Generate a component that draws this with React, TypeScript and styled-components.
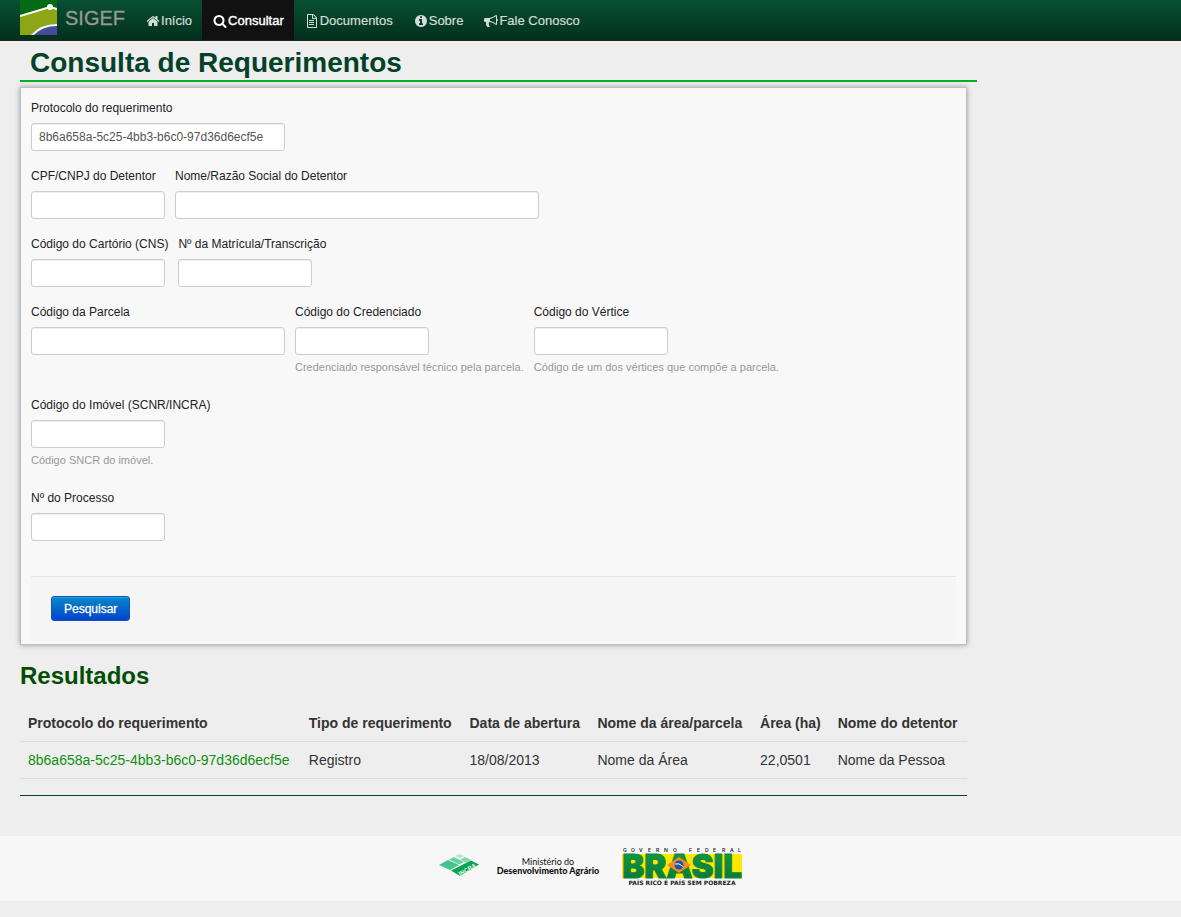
import React from 'react';
import styled, { createGlobalStyle } from 'styled-components';

const GlobalStyle = createGlobalStyle`
  *, *::before, *::after { box-sizing: border-box; }
  body {
    margin: 0;
    background: #eeeeee;
    color: #333333;
    font: 14px/20px "Liberation Sans", Arial, Helvetica, sans-serif;
  }
`;

const Navbar = styled.header`
  display: flex;
  align-items: stretch;
  height: 41px;
  padding-left: 20px;
  background: linear-gradient(to bottom, #085033, #02301c);
  border-bottom: 1px solid #222222;
`;

const Brand = styled.a`
  display: flex;
  align-items: flex-start;
  gap: 8px;
  padding-right: 10px;
  color: #999999;
  font-size: 20px;
  line-height: 36px;
  text-decoration: none;
  -webkit-text-stroke: 0.3px currentColor;
`;

const BrandMark = styled.svg`
  display: block;
  width: 37px;
  height: 35px;
`;

const Menu = styled.nav`
  display: flex;
`;

const MenuLink = styled.a<{ $active?: boolean }>`
  display: flex;
  align-items: center;
  padding: 2px 10px 0;
  font-size: 13px;
  text-decoration: none;
  color: ${(p) => (p.$active ? '#ffffff' : '#d3dcd8')};
  background: ${(p) => (p.$active ? '#111111' : 'transparent')};
  -webkit-text-stroke: ${(p) => (p.$active ? '0.4px' : '0.2px')} currentColor;
`;

const MenuIcon = styled.svg`
  width: 16px;
  height: 14px;
  fill: currentColor;
`;

const Content = styled.main`
  margin-left: 20px;
  max-width: calc((100% - 40px) * 0.83);
`;

const PageTitle = styled.h1`
  margin: 0 -10px 5px 0;
  padding: 5px 0 0 10px;
  border-bottom: 2px solid #05ad25;
  color: #044228;
  font-size: 28px;
  line-height: 34px;
`;

const Panel = styled.form`
  padding: 10px 10px 3px;
  background: #f8f8f8;
  border: 1px solid #bbbfc8;
  box-shadow: 0 0 5px #999999;
`;

const FieldRow = styled.div`
  display: flex;
  flex-wrap: wrap;
  gap: 10px;
  margin-bottom: 15px;
`;

const FieldBox = styled.div`
  display: flex;
  flex-direction: column;
  align-items: flex-start;
`;

const Label = styled.label`
  margin-bottom: 5px;
  font-size: 12px;
  line-height: 20px;
  color: #222222;
`;

const widths = { small: '134px', medium: '254px', large: '364px' };
type Size = keyof typeof widths;

const TextInput = styled.input<{ $size: Size }>`
  width: ${(p) => widths[p.$size]};
  height: 28px;
  padding: 0 7px;
  border: 1px solid #cccccc;
  border-radius: 3px;
  background: #ffffff;
  box-shadow: inset 0 1px 1px rgba(0, 0, 0, 0.075);
  color: #555555;
  font: 12px/20px "Liberation Sans", Arial, sans-serif;
`;

const Help = styled.span`
  margin: 2px 0 3px;
  color: #999999;
  font-size: 11px;
  line-height: 20px;
`;

const Actions = styled.div`
  margin-top: 35px;
  padding: 19px 20px 20px;
  background: #f5f5f5;
  border-top: 1px solid #e5e5e5;
`;

const SubmitButton = styled.button`
  display: block;
  height: 25px;
  padding: 0 12px;
  border: 1px solid #0a55b5;
  border-radius: 3px;
  background: linear-gradient(to bottom, #0688cc, #0444cc);
  box-shadow: inset 0 1px 0 rgba(255, 255, 255, 0.2);
  color: #ffffff;
  font: 12px/20px "Liberation Sans", Arial, sans-serif;
  text-shadow: 0 -1px 0 rgba(0, 0, 0, 0.25);
  -webkit-text-stroke: 0.3px #ffffff;
`;

const SectionTitle = styled.h2`
  margin: 11px 0 9px;
  color: #044d04;
  font-size: 24px;
  line-height: 40px;
`;

const Results = styled.table`
  width: 100%;
  border-collapse: collapse;
  border-bottom: 1px solid #dddddd;

  th, td {
    padding: 8px;
    text-align: left;
    white-space: nowrap;
  }
  td { border-top: 1px solid #dddddd; }
  a { color: #109010; text-decoration: none; }
`;

const Divider = styled.hr`
  margin: 16px 0 40px;
  border: 0;
  border-top: 1px solid #044228;
`;

const Footer = styled.footer`
  display: flex;
  justify-content: center;
  align-items: flex-start;
  height: 65px;
  margin-bottom: 16px;
  background: #f7f7f7;
`;

const IncraLogo = styled.svg`
  width: 42px;
  height: 26px;
  margin: 16px 16px 0 0;
`;

const Ministry = styled.p`
  margin: 21px 23px 0 0;
  color: #111111;
  text-align: center;
  font: 9px/9px Lato, "Open Sans", sans-serif;

  strong { display: block; font-weight: 900; }
`;

const BrasilLogo = styled.svg`
  width: 120px;
  height: 40px;
  margin-top: 10px;
`;

const icons = {
  home: 'M1472 992v480q0 26-19 45t-45 19h-384v-384h-256v384h-384q-26 0-45-19t-19-45v-480q0-1 .5-3t.5-3l575-474 575 474q1 2 1 6zm223-69l-62 74q-8 9-21 11h-3q-13 0-21-7l-692-577-692 577q-12 8-24 7-13-2-21-11l-62-74q-8-10-7-23.5t11-21.5l719-599q32-26 76-26t76 26l244 204v-195q0-14 9-23t23-9h192q14 0 23 9t9 23v408l219 182q10 8 11 21.5t-7 23.5z',
  search: 'M1216 832q0-185-131.5-316.5t-316.5-131.5-316.5 131.5-131.5 316.5 131.5 316.5 316.5 131.5 316.5-131.5 131.5-316.5zm512 832q0 52-38 90t-90 38q-54 0-90-38l-343-342q-179 124-399 124-143 0-273.5-55.5t-225-150-150-225-55.5-273.5 55.5-273.5 150-225 225-150 273.5-55.5 273.5 55.5 225 150 150 225 55.5 273.5q0 220-124 399l343 343q37 37 37 90z',
  file: 'M1468 380q28 28 48 76t20 88v1152q0 40-28 68t-68 28h-1088q-40 0-68-28t-28-68v-1600q0-40 28-68t68-28h640q40 0 88 20t76 48zm-444-244v376h376q-10-29-22-41l-313-313q-12-12-41-22zm384 1528v-1024h-416q-40 0-68-28t-28-68v-416h-512v1536h1024zm-896-864q0-14 9-23t23-9h576q14 0 23 9t9 23v64q0 14-9 23t-23 9h-576q-14 0-23-9t-9-23v-64zm608 224q14 0 23 9t9 23v64q0 14-9 23t-23 9h-576q-14 0-23-9t-9-23v-64q0-14 9-23t23-9h576zm0 256q14 0 23 9t9 23v64q0 14-9 23t-23 9h-576q-14 0-23-9t-9-23v-64q0-14 9-23t23-9h576z',
  info: 'M1152 1376v-160q0-14-9-23t-23-9h-96v-512q0-14-9-23t-23-9h-320q-14 0-23 9t-9 23v160q0 14 9 23t23 9h96v320h-96q-14 0-23 9t-9 23v160q0 14 9 23t23 9h448q14 0 23-9t9-23zm-128-896v-160q0-14-9-23t-23-9h-192q-14 0-23 9t-9 23v160q0 14 9 23t23 9h192q14 0 23-9t9-23zm640 416q0 209-103 385.5t-279.5 279.5-385.5 103-385.5-103-279.5-279.5-103-385.5 103-385.5 279.5-279.5 385.5-103 385.5 103 279.5 279.5 103 385.5z',
  bullhorn: 'M1664 640q53 0 90.5 37.5t37.5 90.5-37.5 90.5-90.5 37.5v384q0 52-38 90t-90 38q-417-347-812-380-58 19-91 66t-31 100.5 40 92.5q-20 33-23 65.5t6 58 33.5 55 48 50 61.5 50.5q-29 58-111.5 83t-168.5 11.5-132-55.5q-7-23-29.5-87.5t-32-94.5-23-89-15-101 3.5-98.5 22-110.5h-122q-66 0-113-47t-47-113v-192q0-66 47-113t113-47h480q435 0 896-384 52 0 90 38t38 90v384zm-128 604v-954q-394 302-768 343v270q377 42 768 341z',
};

const menu: { label: string; icon: keyof typeof icons; active?: boolean }[] = [
  { label: 'Início', icon: 'home' },
  { label: 'Consultar', icon: 'search', active: true },
  { label: 'Documentos', icon: 'file' },
  { label: 'Sobre', icon: 'info' },
  { label: 'Fale Conosco', icon: 'bullhorn' },
];

type FieldDef = { id: string; label: string; size: Size; value?: string; help?: string };

const rows: FieldDef[][] = [
  [{ id: 'protocolo', label: 'Protocolo do requerimento', size: 'medium', value: '8b6a658a-5c25-4bb3-b6c0-97d36d6ecf5e' }],
  [
    { id: 'cpf', label: 'CPF/CNPJ do Detentor', size: 'small' },
    { id: 'nome', label: 'Nome/Razão Social do Detentor', size: 'large' },
  ],
  [
    { id: 'cns', label: 'Código do Cartório (CNS)', size: 'small' },
    { id: 'matricula', label: 'Nº da Matrícula/Transcrição', size: 'small' },
  ],
  [
    { id: 'parcela', label: 'Código da Parcela', size: 'medium' },
    { id: 'credenciado', label: 'Código do Credenciado', size: 'small', help: 'Credenciado responsável técnico pela parcela.' },
    { id: 'vertice', label: 'Código do Vértice', size: 'small', help: 'Código de um dos vértices que compõe a parcela.' },
  ],
  [{ id: 'imovel', label: 'Código do Imóvel (SCNR/INCRA)', size: 'small', help: 'Código SNCR do imóvel.' }],
  [{ id: 'processo', label: 'Nº do Processo', size: 'small' }],
];

const columns = [
  'Protocolo do requerimento',
  'Tipo de requerimento',
  'Data de abertura',
  'Nome da área/parcela',
  'Área (ha)',
  'Nome do detentor',
];

function Field({ id, label, size, value, help }: FieldDef) {
  return (
    <FieldBox>
      <Label htmlFor={id}>{label}</Label>
      <TextInput id={id} type="text" $size={size} defaultValue={value} />
      {help && <Help>{help}</Help>}
    </FieldBox>
  );
}

export default function App() {
  return (
    <>
      <GlobalStyle />
      <Navbar>
        <Brand href="#">
          <BrandMark viewBox="0 0 37 35" aria-hidden="true">
            <rect width="37" height="35" fill="#056b14" />
            <path d="M0 16L30 7L37 9V35H0Z" fill="#8da516" />
            <path d="M12 35C19 27 28 25 37 25V35Z" fill="#454b97" />
            <path d="M0 16L30 7L37 9" fill="none" stroke="#fff" strokeWidth="2" />
            <path d="M12 35.500C19 27.500 27 25 37 25" fill="none" stroke="#fff" strokeWidth="2" />
            <circle cx="30" cy="7" r="3" fill="#fff" />
          </BrandMark>
          SIGEF
        </Brand>
        <Menu>
          {menu.map((m) => (
            <MenuLink key={m.label} href="#" $active={m.active}>
              <MenuIcon viewBox="0 0 1792 1792" aria-hidden="true"><path d={icons[m.icon]} /></MenuIcon>
              {m.label}
            </MenuLink>
          ))}
        </Menu>
      </Navbar>

      <Content>
        <PageTitle>Consulta de Requerimentos</PageTitle>
        <Panel onSubmit={(e) => e.preventDefault()}>
          {rows.map((row) => (
            <FieldRow key={row[0].id}>
              {row.map((f) => <Field key={f.id} {...f} />)}
            </FieldRow>
          ))}
          <Actions>
            <SubmitButton type="submit">Pesquisar</SubmitButton>
          </Actions>
        </Panel>

        <SectionTitle>Resultados</SectionTitle>
        <Results>
          <thead>
            <tr>{columns.map((c) => <th key={c} scope="col">{c}</th>)}</tr>
          </thead>
          <tbody>
            <tr>
              <td><a href="#">8b6a658a-5c25-4bb3-b6c0-97d36d6ecf5e</a></td>
              <td>Registro</td>
              <td>18/08/2013</td>
              <td>Nome da Área</td>
              <td>22,0501</td>
              <td>Nome da Pessoa</td>
            </tr>
          </tbody>
        </Results>
        <Divider />
      </Content>

      <Footer>
        <IncraLogo viewBox="0 0 42 26" role="img" aria-label="INCRA">
          <path d="M0 13L9 8L20 13L11 18Z" fill="#42c48b" />
          <path d="M10 7.500L15 5L25 10L20 12.500Z" fill="#6bd0a2" />
          <path d="M16 4L20.500 2L25 4L20.500 6.500Z" fill="#b9e8d3" />
          <path d="M21 7.500L26 5L32 8L27 10.500Z" fill="#84d8b1" />
          <path d="M12 18.500L32 8.500L40 12.500L21 24Z" fill="#05a551" />
          <text x="21" y="24" transform="rotate(-30 21 24)" fill="#eef9f2" fontFamily="Liberation Sans, sans-serif" fontWeight="700" fontSize="6">INCRA</text>
        </IncraLogo>
        <Ministry>
          Ministério do
          <strong>Desenvolvimento Agrário</strong>
        </Ministry>
        <BrasilLogo viewBox="0 0 120 40" role="img" aria-label="Governo Federal - Brasil">
          <defs>
            <linearGradient id="green" x1="0" y1="0" x2="0" y2="1">
              <stop offset="0" stopColor="#16a045" />
              <stop offset="1" stopColor="#05703a" />
            </linearGradient>
          </defs>
          <rect x="0" y="8" width="120" height="24" fill="#ffe600" />
          <text x="60" y="32" textAnchor="middle" fontFamily="Inter, sans-serif" fontWeight="900" fontSize="33" fill="url(#green)" stroke="#0b8b3e" strokeWidth="1">BRASIL</text>
          <path d="M45 19L57 11L69 19L57 27Z" fill="#f58a1f" />
          <circle cx="57" cy="19" r="4.500" fill="#1c55a5" />
          <path d="M53 18Q57 16.500 61 20.500" fill="none" stroke="#fff" strokeWidth="1" />
          <text x="1 9 17 26 34 42 51 59 67 75 83 91 100 108 116" y="6" fontFamily="Inter, sans-serif" fontSize="5" fontWeight="600" fill="#222">GOVERNO FEDERAL</text>
          <text x="60" y="39" textAnchor="middle" fontFamily="DejaVu Sans, sans-serif" fontSize="6" fontWeight="700" fill="#222">PAÍS RICO É PAÍS SEM POBREZA</text>
        </BrasilLogo>
      </Footer>
    </>
  );
}
